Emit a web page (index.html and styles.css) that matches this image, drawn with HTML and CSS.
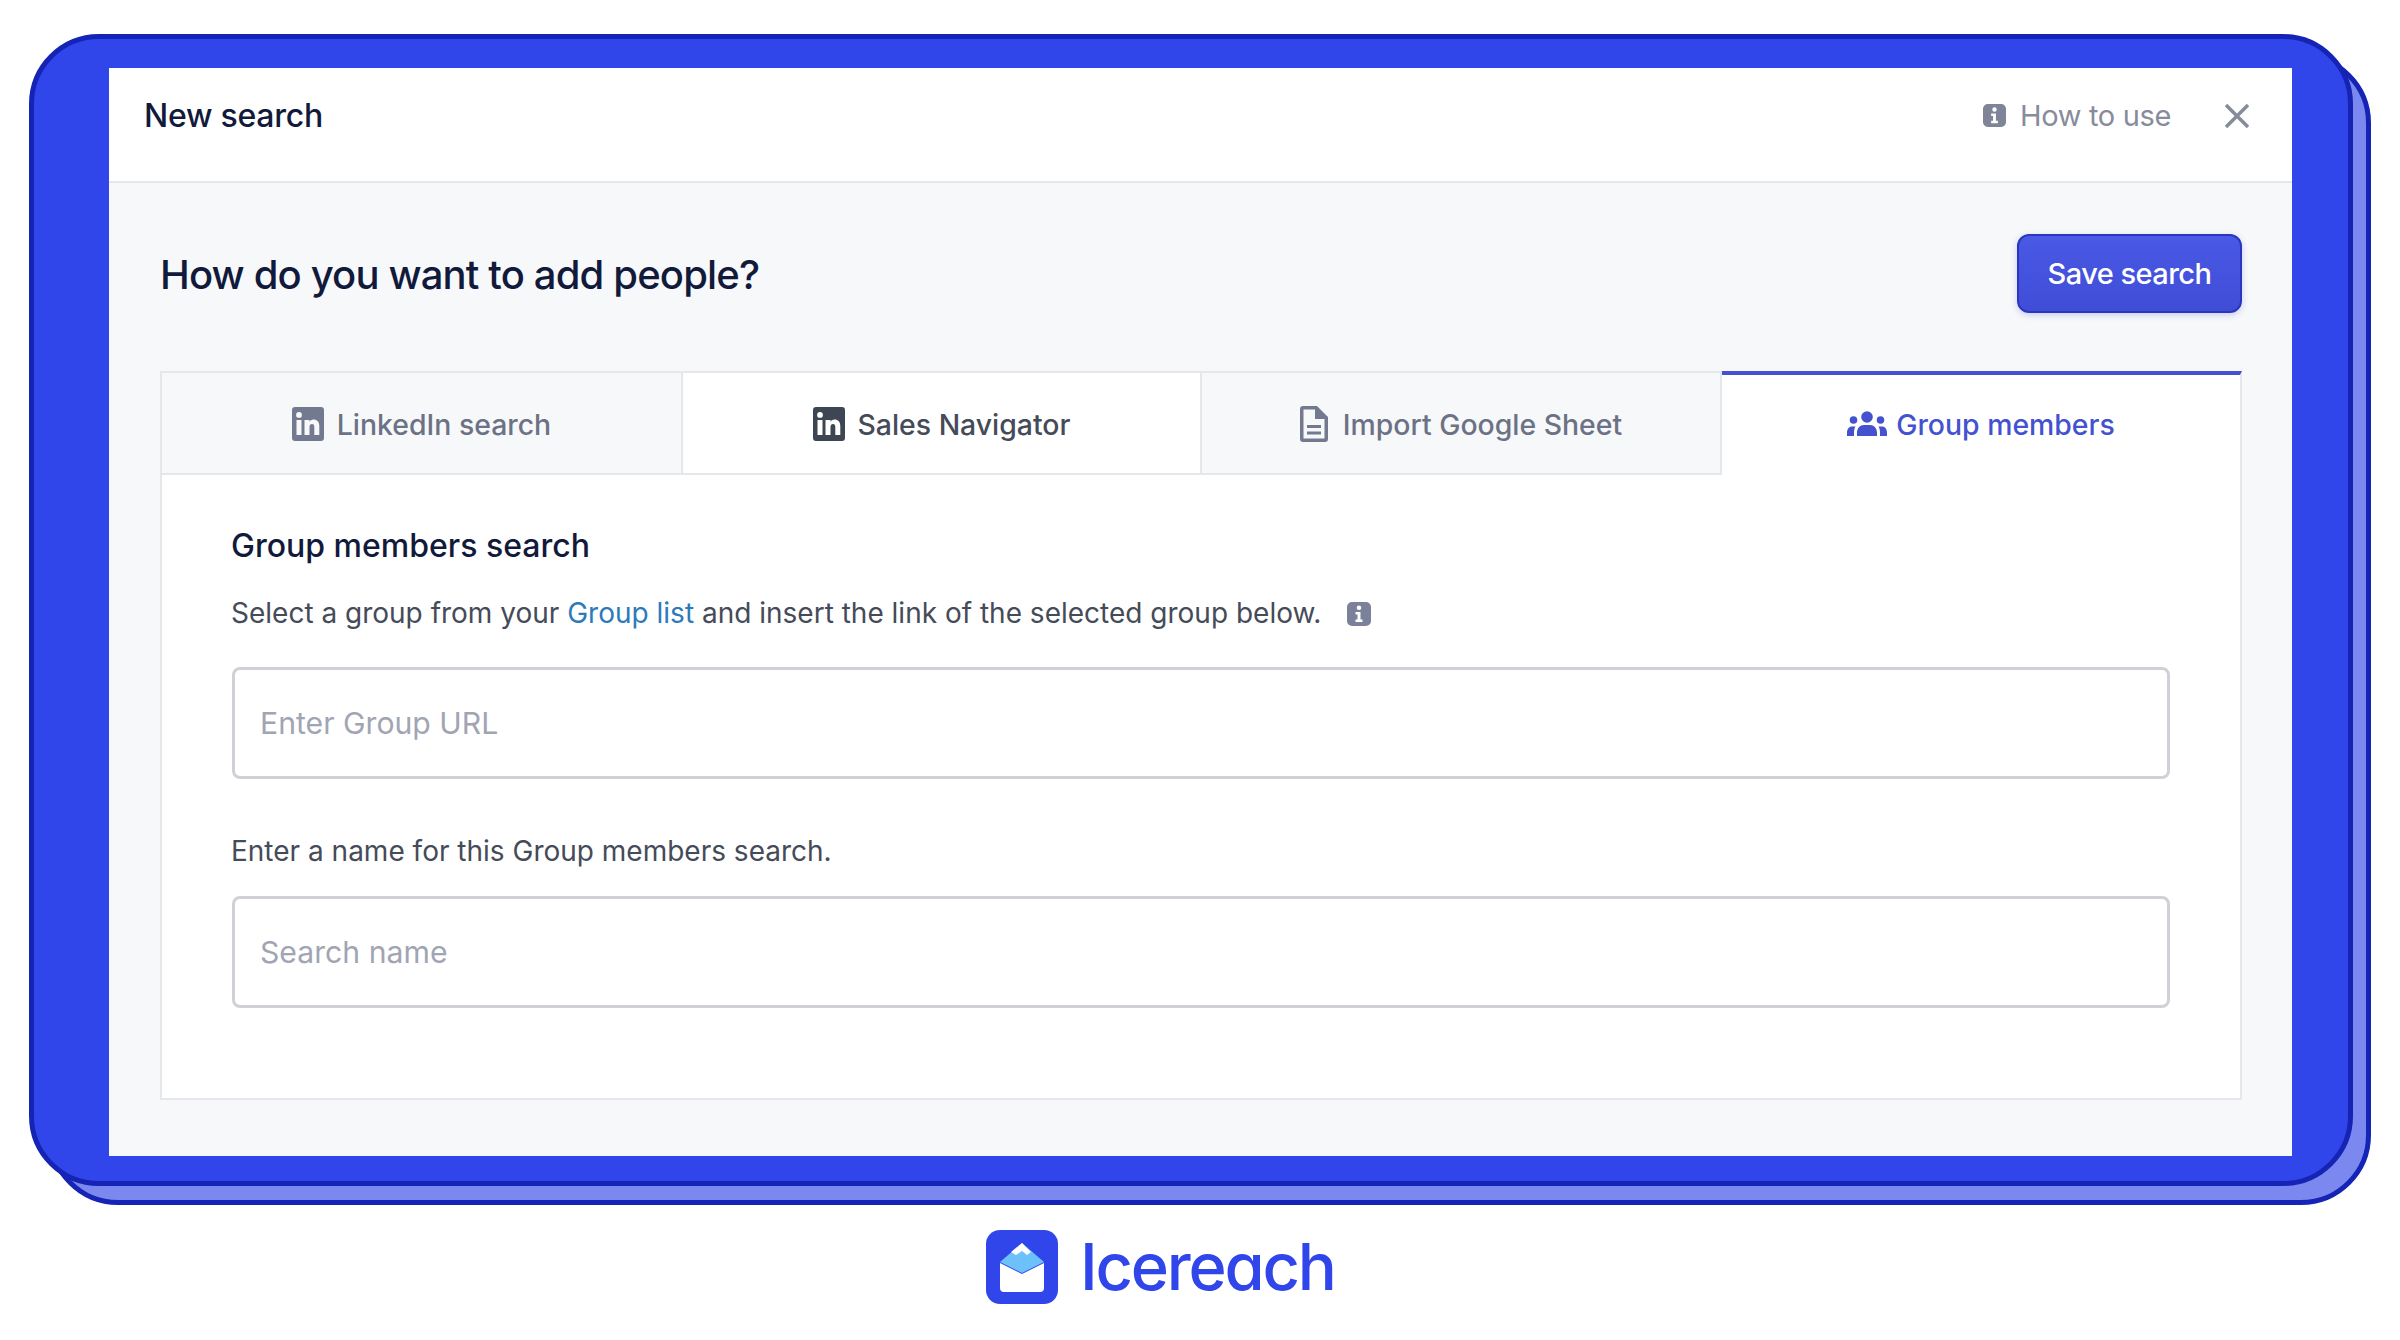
FILE: index.html
```html
<!DOCTYPE html>
<html lang="en">
<head>
<meta charset="utf-8">
<title>New search</title>
<link rel="stylesheet" href="styles.css">
</head>
<body>
<svg width="0" height="0" class="defs">
  <symbol id="i-in" viewBox="0 0 32 34"><path fill-rule="evenodd" d="M3 0h26a3 3 0 0 1 3 3v28a3 3 0 0 1-3 3H3a3 3 0 0 1-3-3V3a3 3 0 0 1 3-3zM4.500 13v15h5V13zM7 5a2.900 2.900 0 1 0 0 5.800A2.900 2.900 0 0 0 7 5zm5.500 8v15h5v-8c0-2 1-3 2.500-3s2.300 1 2.300 3v8h5v-9c0-4-2.300-6.400-5.800-6.400-2 0-3.300 1-4 2.100V13z"/></symbol>
  <symbol id="i-info" viewBox="0 0 24 24"><path fill-rule="evenodd" d="M5 0h14a5 5 0 0 1 5 5v14a5 5 0 0 1-5 5H5a5 5 0 0 1-5-5V5a5 5 0 0 1 5-5zm7 3.500a2.300 2.300 0 1 0 0 4.600 2.300 2.300 0 0 0 0-4.600zM8.500 10v2.500h2v5h-2V20h7v-2.500h-2V10z"/></symbol>
</svg>
<main class="stage">
  <div class="frame">
    <section class="modal">
      <header class="modal-head">
        <h1 class="modal-title">New search</h1>
        <div class="modal-actions">
          <a class="how"><svg class="info-small"><use href="#i-info"/></svg>How to use</a>
          <svg class="close" viewBox="0 0 24 24"><path d="M1 1l22 22M23 1L1 23"/></svg>
        </div>
      </header>
      <div class="modal-body">
        <div class="title-row">
          <h2 class="question">How do you want to add people?</h2>
          <button class="save">Save search</button>
        </div>
        <div class="panel">
          <nav class="tabs">
            <div class="tab"><svg class="ic-in"><use href="#i-in"/></svg>LinkedIn search</div>
            <div class="tab tab-plain"><svg class="ic-in"><use href="#i-in"/></svg>Sales Navigator</div>
            <div class="tab">
              <svg class="ic-file" viewBox="0 0 28 36"><path fill-rule="evenodd" d="M3 0h14l11 11v22a3 3 0 0 1-3 3H3a3 3 0 0 1-3-3V3a3 3 0 0 1 3-3zm.5 3.500v29h21V13H15V3.500zM7 19h14v3H7zm0 6.500h14v3H7z"/></svg>
              Import Google Sheet
            </div>
            <div class="tab tab-active">
              <svg class="ic-users" viewBox="0 0 40 26"><circle cx="20" cy="6" r="5.800"/><circle cx="6.500" cy="9" r="3.800"/><circle cx="33.500" cy="9" r="3.800"/><path d="M10 25v-3c0-5 3-8 7-8h6c4 0 7 3 7 8v3zM0 25v-3c0-4 2-6.500 5-6.500h3.500C7.500 17 7 19 7 22v3zM40 25v-3c0-4-2-6.500-5-6.500h-3.500c1 1.500 1.500 3.500 1.500 6.500v3z"/></svg>
              Group members
            </div>
          </nav>
          <div class="form">
            <h3 class="form-title">Group members search</h3>
            <p class="hint">Select a group from your <a class="link">Group list</a> and insert the link of the selected group below.<svg class="info-mid"><use href="#i-info"/></svg></p>
            <input class="field" type="text" placeholder="Enter Group URL">
            <p class="hint hint-second">Enter a name for this Group members search.</p>
            <input class="field field-second" type="text" placeholder="Search name">
          </div>
        </div>
      </div>
    </section>
  </div>
  <div class="brand">
    <svg class="brand-mark" viewBox="0 0 72 74">
      <rect width="72" height="74" rx="14" fill="#3146ea"/>
      <path d="M36 13L14 32l22 11 22-11z" fill="#6cc1fb"/>
      <path d="M36 13L25 22l5 3 6-4 5 4 4-3z" fill="#fff"/>
      <path d="M14 33l22 11 22-11v25a4 4 0 0 1-4 4H18a4 4 0 0 1-4-4z" fill="#fff"/>
    </svg>
    <span class="brand-name">Icereach</span>
  </div>
</main>
</body>
</html>
```
FILE: styles.css
```css
*, *::before { box-sizing: border-box; }
html, body { margin: 0; padding: 0; }
html { background: #fff; }
body { width: 2400px; height: 1340px; overflow: hidden; font-family: Inter, "Liberation Sans", sans-serif; color: #111a3a; }
.defs { position: absolute; }
.stage { padding: 34px 0 0 29px; }
.frame { position: relative; width: 2324px; height: 1152px; padding: 29px 56px 25px 75px; background: #3146ea; border: 5px solid #1524b4; border-radius: 70px; }
.frame::before { content: ""; position: absolute; z-index: -1; left: 14px; top: 14px; width: 2323px; height: 1152px; background: #7a88ef; border: 5px solid #1524b4; border-radius: 70px; }
.modal { height: 1088px; display: flex; flex-direction: column; background: #f7f8fa; }
.modal-head { height: 115px; flex: none; display: flex; align-items: center; justify-content: space-between; padding: 0 43px 18px 35px; background: #fff; border-bottom: 2px solid #e5e7eb; }
.modal-title { margin: 0; font-size: 32px; font-weight: 500; letter-spacing: -0.26px; color: #111a3a; }
.modal-actions { display: flex; align-items: center; gap: 54px; }
.how { display: flex; align-items: center; gap: 14px; font-size: 29px; letter-spacing: -0.35px; color: #878c9b; }
.info-small { width: 23px; height: 23px; fill: #7f8596; }
.close { width: 24px; height: 24px; stroke: #878c9b; stroke-width: 3.500; fill: none; }
.modal-body { flex: 1; padding: 51px 50px 56px 51px; display: flex; flex-direction: column; }
.title-row { display: flex; align-items: center; justify-content: space-between; height: 79px; margin-bottom: 58px; }
.question { margin: 2px 0 0; font-size: 40px; font-weight: 500; letter-spacing: -0.85px; color: #111a3a; }
.save { width: 225px; height: 79px; border: 2px solid #2a36bd; border-radius: 12px; background: linear-gradient(#4a59e6, #3f4dd6); color: #fff; font: 500 29px Inter, sans-serif; letter-spacing: -0.55px; box-shadow: 0 2px 6px rgba(60, 70, 220, .25); }
.panel { flex: 1; display: flex; flex-direction: column; background: #fff; border: 2px solid #e5e7eb; border-top: 0; }
.tabs { display: grid; grid-template-columns: 523px 519px 520px 1fr; height: 104px; flex: none; margin-left: -2px; margin-right: -2px; }
.tab { display: flex; align-items: center; justify-content: center; gap: 15px; padding-top: 2px; font-size: 28.4px; font-weight: 500; color: #6c7285; background: #f7f8fa; border: 2px solid #e5e7eb; border-left-width: 0; }
.tab:first-child { border-left-width: 2px; }
.tab-plain { background: #fff; color: #454b58; }
.tab-plain .ic-in { fill: #3f4653; }
.tab-active { background: #fff; color: #4452cf; border-top: 4px solid #4452cf; border-bottom: 0; padding-top: 0; padding-bottom: 2px; border-right: 2px solid #e5e7eb; }
.ic-in { width: 32px; height: 34px; fill: #737a90; margin-right: -2px; }
.ic-file { width: 28px; height: 36px; fill: #737a90; }
.ic-users { width: 40px; height: 26px; fill: #4452cf; margin-right: -6px; }
.form { padding: 49px 70px 0 69px; }
.form-title { margin: 0; font-size: 32px; font-weight: 500; line-height: 44px; color: #111a3a; }
.hint { margin: 23px 0 0; font-size: 28px; line-height: 44px; color: #454b58; }
.link { color: #2e79b9; }
.info-mid { width: 24px; height: 24px; margin-left: 26px; vertical-align: -3px; fill: #7a8199; }
.field { display: block; width: 1938px; height: 112px; margin: 32px 0 0 1px; padding: 0 25px; background: #fff; border: 3px solid #cfd1d6; border-radius: 8px; font: 30.2px Inter, sans-serif; color: #111a3a; }
.field::placeholder { color: #a1a5b3; opacity: 1; }
.hint-second { margin-top: 50px; }
.field-second { margin-top: 23px; }
.brand { display: flex; align-items: center; gap: 22px; margin: 44px 0 0 957px; }
.brand-mark { width: 72px; height: 74px; flex: none; }
.brand-name { font-size: 65px; font-weight: 500; color: #3146ea; letter-spacing: -2.2px; line-height: 74px; font-feature-settings: "cv11"; }
```
